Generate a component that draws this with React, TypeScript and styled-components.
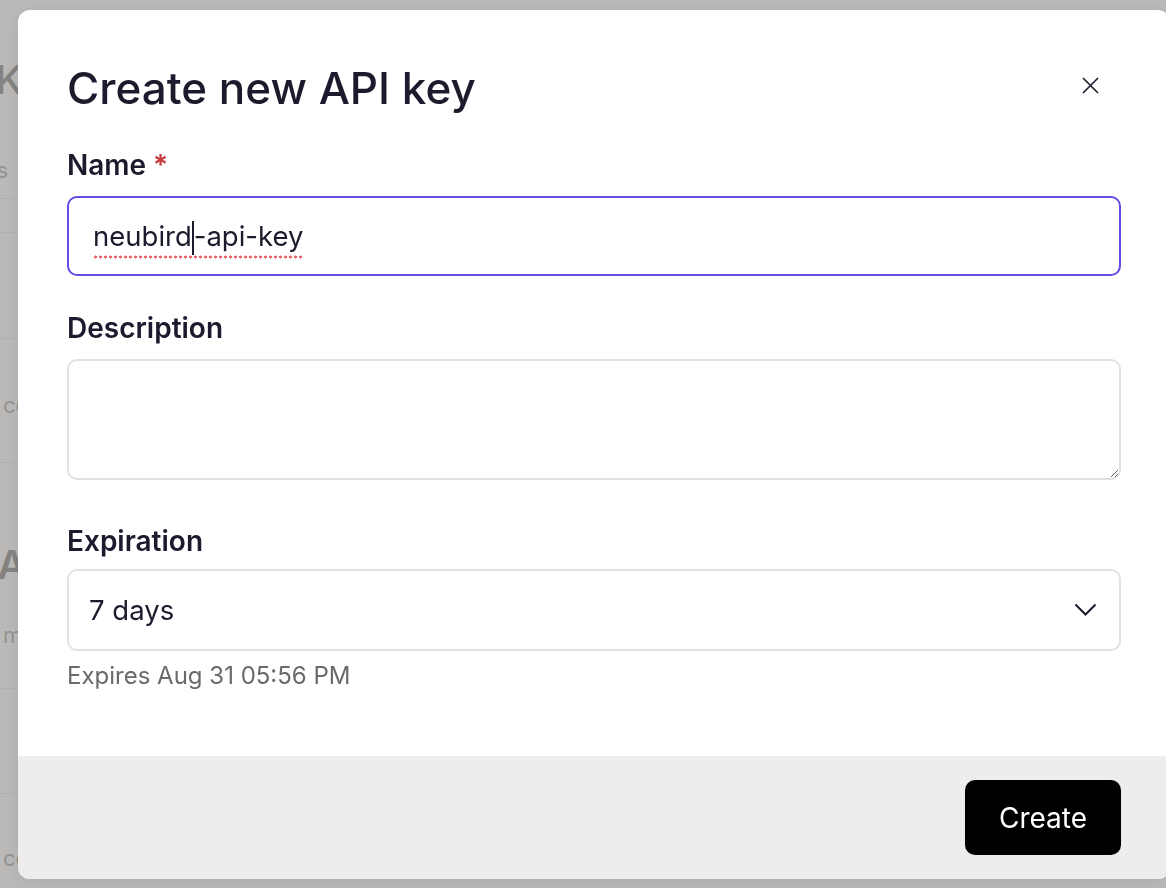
import React from 'react';
import styled, { createGlobalStyle } from 'styled-components';

const GlobalStyle = createGlobalStyle`
  html, body {
    margin: 0;
    padding: 0;
    height: 100%;
    overflow: hidden;
    background: #fff;
  }
  body {
    font-family: Inter, 'Noto Sans', 'Liberation Sans', sans-serif;
    color: #1c1b2d;
  }
  * {
    box-sizing: border-box;
  }
`;

// page that sits behind the overlay, only a thin strip of it shows
const BgPage = styled.div`
  display: flex;
  flex-direction: column;
  margin-left: -78px;
  width: 520px;
  padding-top: 56px;
  color: #2a2a2a;
  white-space: nowrap;
`;

const BgTitle = styled.div`
  font-size: 40px;
  font-weight: 500;
  line-height: 48px;
  margin-left: -2px;
`;

const BgText = styled.div`
  height: 40px;
  line-height: 40px;
  font-size: 22px;
  color: #666;
`;

const BgHeading = styled.div`
  height: 48px;
  line-height: 48px;
  font-size: 40px;
  font-weight: 600;
  margin-left: -1px;
`;

const BgSpacer = styled.div<{ size: number }>`
  height: ${(p) => p.size}px;
  flex-shrink: 0;
`;

const BgDivider = styled.div`
  height: 1px;
  background: #dcdcdc;
`;

const Overlay = styled.div`
  position: fixed;
  inset: 0;
  background: rgba(164, 163, 160, 0.75);
  display: flex;
  align-items: flex-start;
`;

const Modal = styled.div`
  margin: 10px 0 0 18px;
  width: 1152px;
  height: 869px;
  flex-shrink: 0;
  background: #fff;
  border-radius: 12px;
  overflow: hidden;
  display: flex;
  flex-direction: column;
  box-shadow: 0 4px 24px rgba(0, 0, 0, 0.08);
`;

const Body = styled.div`
  flex: 1;
  padding: 54px 49px 0;
  display: flex;
  flex-direction: column;
`;

const Header = styled.div`
  display: flex;
  align-items: center;
  justify-content: space-between;
  margin-bottom: 38px;
`;

const Title = styled.h2`
  margin: 0;
  font-size: 44px;
  line-height: 48px;
  font-weight: 500;
  color: #1c1b2d;
`;

const CloseButton = styled.button`
  width: 32px;
  height: 32px;
  margin: -6px 15px 0 0;
  border: none;
  background: transparent;
  display: flex;
  align-items: center;
  justify-content: center;
  padding: 0;
  color: #1c1b2d;
  cursor: pointer;
`;

const Field = styled.div<{ gap: number }>`
  display: flex;
  flex-direction: column;
  margin-bottom: ${(p) => p.gap}px;
`;

const Label = styled.label<{ tight?: boolean }>`
  font-size: 28px;
  line-height: 30px;
  font-weight: 600;
  color: #1c1b2d;
  margin-bottom: ${(p) => (p.tight ? 13 : 16)}px;
`;

const Required = styled.span`
  color: #c6383a;
  margin-left: 7px;
`;

const NameInput = styled.div`
  height: 80px;
  border: 2px solid #6a48e8;
  border-radius: 10px;
  padding: 0 24px;
  display: flex;
  align-items: center;
  font-size: 27.5px;
  color: #1c1b2d;
`;

const Misspelled = styled.span`
  display: inline-flex;
  align-items: center;
  padding-bottom: 6px;
  margin-bottom: -6px;
  background-image: radial-gradient(circle, #f0646c 1.3px, transparent 1.8px);
  background-size: 5px 4px;
  background-repeat: repeat-x;
  background-position: 0 100%;
`;

const Caret = styled.span`
  display: inline-block;
  width: 2px;
  height: 34px;
  margin-bottom: -4px;
  background: #1c1b2d;
`;

const TextArea = styled.textarea`
  display: block;
  height: 121px;
  border: 2px solid #e3e2de;
  border-radius: 10px;
  padding: 16px 20px;
  font-family: inherit;
  font-size: 26px;
  resize: vertical;
  outline: none;
`;

const Select = styled.div`
  height: 82px;
  flex-shrink: 0;
  border: 2px solid #e3e2de;
  border-radius: 10px;
  padding: 0 22px 0 20px;
  display: flex;
  align-items: center;
  justify-content: space-between;
  font-size: 27.5px;
  color: #1c1b2d;
`;

const Hint = styled.div`
  margin-top: 11px;
  font-size: 24px;
  line-height: 28px;
  color: #6b6a68;
`;

const Footer = styled.div`
  height: 123px;
  flex-shrink: 0;
  background: #eeedeb;
  display: flex;
  align-items: center;
  justify-content: flex-end;
  padding: 0 49px;
`;

const PrimaryButton = styled.button`
  width: 156px;
  height: 75px;
  border: none;
  border-radius: 10px;
  background: #000;
  color: #fff;
  font-family: inherit;
  font-size: 28px;
  cursor: pointer;
`;

export default function App() {
  return (
    <>
      <GlobalStyle />
      <BgPage aria-hidden="true">
        <BgTitle>API Keys</BgTitle>
        <BgSpacer size={46} />
        <BgText>Defaults</BgText>
        <BgSpacer size={8} />
        <BgDivider />
        <BgSpacer size={33} />
        <BgDivider />
        <BgSpacer size={105} />
        <BgDivider />
        <BgSpacer size={46} />
        <BgText>Default config</BgText>
        <BgSpacer size={37} />
        <BgDivider />
        <BgSpacer size={78} />
        <BgHeading>Old API keys</BgHeading>
        <BgSpacer size={26} />
        <BgText>Default max</BgText>
        <BgSpacer size={33} />
        <BgDivider />
        <BgSpacer size={104} />
        <BgDivider />
        <BgSpacer size={44} />
        <BgText>Default config</BgText>
      </BgPage>
      <Overlay>
        <Modal role="dialog" aria-labelledby="dlg-title">
          <Body>
            <Header>
              <Title id="dlg-title">Create new API key</Title>
              <CloseButton aria-label="Close">
                <svg width="17" height="17" viewBox="0 0 17 17" fill="none">
                  <path d="M1 1L16 16M16 1L1 16" stroke="currentColor" strokeWidth="1.6" />
                </svg>
              </CloseButton>
            </Header>

            <Field gap={37}>
              <Label>
                Name<Required>*</Required>
              </Label>
              <NameInput role="textbox" aria-label="Name">
                <Misspelled>
                  neubird
                  <Caret />
                  -api-key
                </Misspelled>
              </NameInput>
            </Field>

            <Field gap={46}>
              <Label>Description</Label>
              <TextArea aria-label="Description" />
            </Field>

            <Field gap={0}>
              <Label tight>Expiration</Label>
              <Select role="combobox" aria-label="Expiration">
                <span>7 days</span>
                <svg width="23" height="14" viewBox="0 0 23 14" fill="none">
                  <path d="M1.5 1.5L11.5 11.5L21.5 1.5" stroke="#1c1b2d" strokeWidth="2" />
                </svg>
              </Select>
              <Hint>Expires Aug 31 05:56 PM</Hint>
            </Field>
          </Body>
          <Footer>
            <PrimaryButton>Create</PrimaryButton>
          </Footer>
        </Modal>
      </Overlay>
    </>
  );
}
